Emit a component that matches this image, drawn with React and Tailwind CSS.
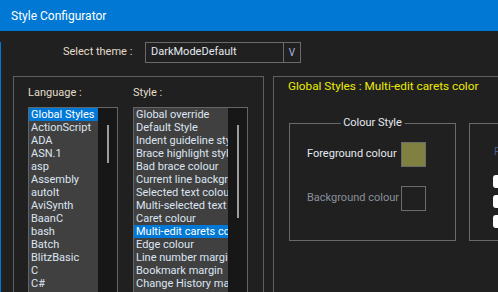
const languages = [
  'Global Styles', 'ActionScript', 'ADA', 'ASN.1', 'asp', 'Assembly', 'autoIt',
  'AviSynth', 'BaanC', 'bash', 'Batch', 'BlitzBasic', 'C', 'C#', 'C++',
];

const styles = [
  'Global override', 'Default Style', 'Indent guideline style', 'Brace highlight style',
  'Bad brace colour', 'Current line background colour', 'Selected text colour',
  'Multi-selected text colour', 'Caret colour', 'Multi-edit carets color', 'Edge colour',
  'Line number margin', 'Bookmark margin', 'Change History margin', 'Fold',
];

// Dark listbox with a thin overlay scrollbar
const ListBox = ({ items, selected, itemsClass, thumbClass }) => (
  <div className="flex h-[200px] border border-[#646464] bg-[#171717]">
    <div className={`${itemsClass} h-full overflow-hidden bg-[#404040]`}>
      {items.map((item, i) => (
        <div
          key={item}
          className={`h-[13px] pl-[2px] text-[11px] leading-[13px] whitespace-nowrap ${
            i === selected ? 'bg-[#0078d7] text-white' : 'text-[#dde5f2]'
          }`}
        >
          {item}
        </div>
      ))}
    </div>
    <div className="flex flex-1 justify-center">
      <div className={`${thumbClass} w-[2px] bg-[#9c9c9c]`} />
    </div>
  </div>
);

const ColourRow = ({ label, fill, dim }) => (
  <div className="flex h-[25px] items-center pl-[17px]">
    <span className={`w-[94px] text-[11px] ${dim ? 'text-[#8a909c]' : 'text-[#e4e8f0]'}`}>{label}</span>
    <div className={`h-[25px] w-[25px] border border-[#6c6c6c] ${fill}`} />
  </div>
);

export default function App() {
  return (
    <div className="h-[292px] w-[498px] overflow-hidden bg-[#202020] font-['Roboto',sans-serif]">
      {/* Title bar */}
      <div className="flex h-[31px] items-center bg-[#0078d4] pl-[11px] text-[12px] text-white">
        Style Configurator
      </div>

      <div className="h-[261px] border-l border-[#0078d4]">
        {/* Theme selector */}
        <div className="mt-[11px] flex h-[21px] items-center">
          <span className="ml-[62px] w-[82px] text-[11px] text-[#e2ddc8]">Select theme :</span>
          <div className="flex h-[21px] w-[156px] items-center border border-[#6a6a6a]">
            <span className="flex-1 pl-[5px] text-[11px] text-[#e4e8f0]">DarkModeDefault</span>
            <div className="flex h-full w-[17px] items-center justify-center border-l border-[#6a6a6a] text-[10px] text-[#a9b8e0]">
              V
            </div>
          </div>
        </div>

        <div className="mt-[13px] flex items-start">
          {/* Language / style lists */}
          <div className="ml-[12px] flex h-[230px] w-[251px] shrink-0 gap-[15px] border border-[#5f5f5f] pl-[14px] pt-[8px]">
            <div className="flex w-[90px] flex-col">
              <span className="h-[16px] text-[11px] leading-[16px] text-[#e2ddc8]">Language :</span>
              <div className="mt-[6px]">
                <ListBox items={languages} selected={0} itemsClass="w-[69px]" thumbClass="mt-[17px] h-[38px]" />
              </div>
            </div>
            <div className="flex w-[115px] flex-col">
              <span className="h-[16px] text-[11px] leading-[16px] text-[#e2ddc8]">Style :</span>
              <div className="mt-[6px]">
                <ListBox items={styles} selected={9} itemsClass="w-[94px]" thumbClass="mt-[17px] h-[93px]" />
              </div>
            </div>
          </div>

          {/* Style details */}
          <div className="ml-[9px] h-[230px] w-[240px] shrink-0 border border-[#5f5f5f] pl-[14px] pt-[1px]">
            <div className="h-[16px] text-[11.75px] leading-[16px] whitespace-nowrap text-[#ecec00]">
              Global Styles : Multi-edit carets color
            </div>
            <div className="mt-[29px] flex">
              <div className="relative ml-[1px] h-[118px] w-[167px] shrink-0 border border-[#6a6a6a] pt-[18px]">
                <span className="absolute -top-[9px] left-1/2 -translate-x-1/2 bg-[#202020] px-[3px] text-[11px] leading-[16px] whitespace-nowrap text-[#e4e8f0]">
                  Colour Style
                </span>
                <ColourRow label="Foreground colour" fill="bg-[#808040]" />
                <div className="mt-[19px]">
                  <ColourRow label="Background colour" fill="bg-transparent" dim />
                </div>
              </div>
              <div className="ml-[13px] h-[118px] w-[100px] shrink-0 border border-[#6a6a6a]">
                <div className="mt-[20px] pl-[24px] text-[11px] leading-[16px] whitespace-nowrap text-[#4c5f88]">
                  Font name :
                </div>
                <div className="mt-[15px] flex flex-col gap-[7px] pl-[23px]">
                  <div className="h-[13px] w-[13px] rounded-[3px] bg-white" />
                  <div className="h-[13px] w-[13px] rounded-[3px] bg-white" />
                  <div className="h-[13px] w-[13px] rounded-[3px] bg-white" />
                </div>
              </div>
            </div>
          </div>
        </div>
      </div>
    </div>
  );
}
